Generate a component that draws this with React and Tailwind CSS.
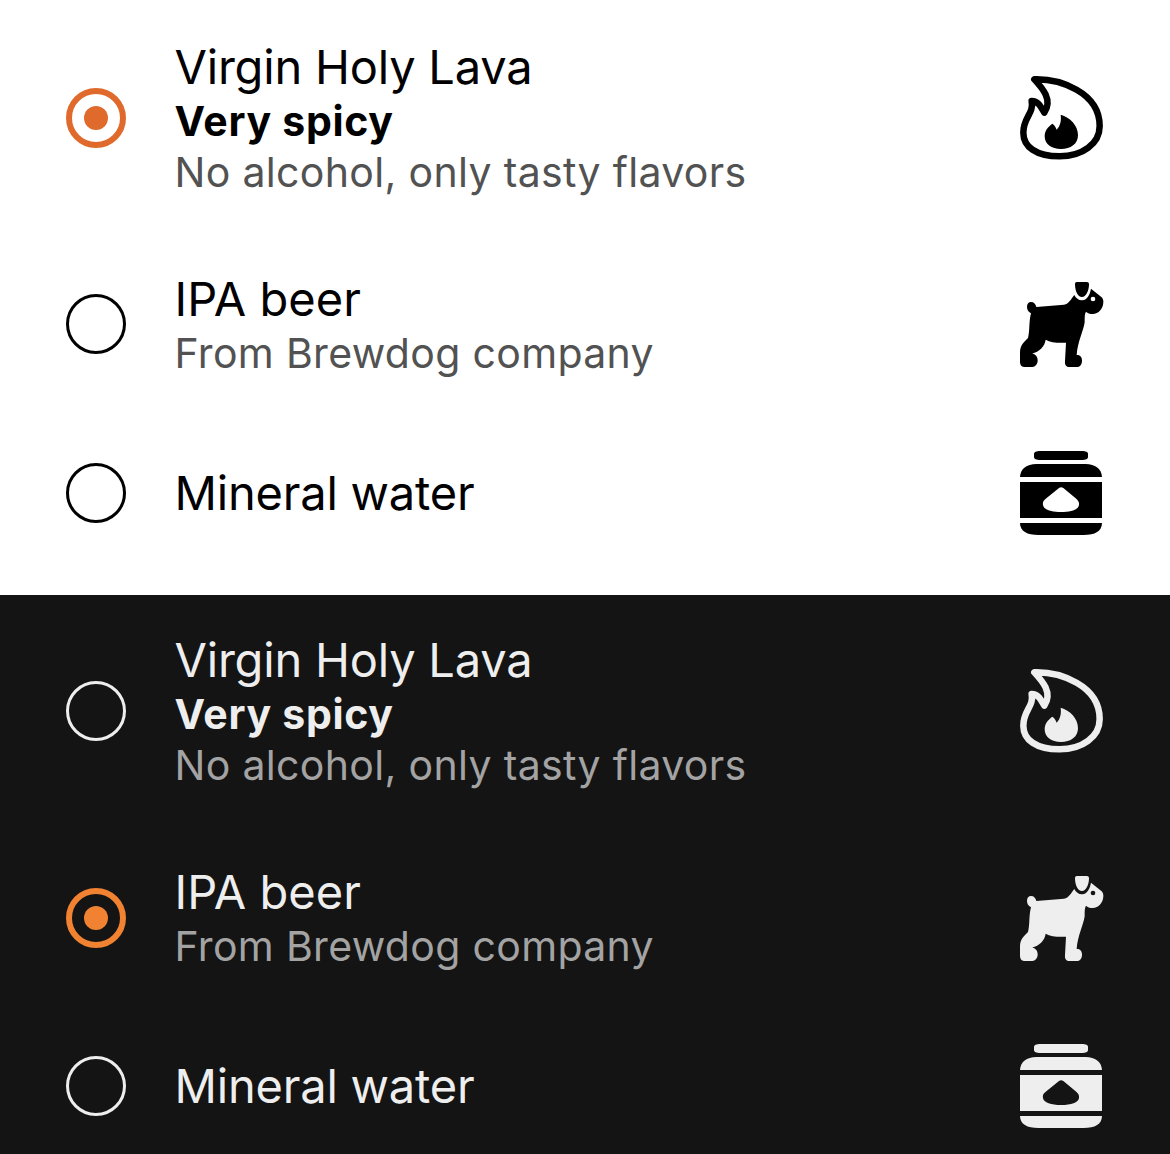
const Flame = () => (
  <svg viewBox="30 33 252 252" className="block size-[84px] overflow-visible" fill="none">
    <path
      d="M73 43C150 41 269 82 269 183C269 237 216 274 149 274C78 274 40 245 40 203C40 156 72 147 65 108C84 108 91 122 103 143C130 103 94 66 73 43Z"
      stroke="currentColor"
      strokeWidth="19.5"
      strokeLinejoin="round"
    />
    <path
      d="M152 149C180 157 204 181 204 211C204 237 182 252 153 252C124 252 104 237 104 214C104 196 113 187 127 176Q135 180 140 194C152 181 154 166 152 149Z"
      fill="currentColor"
    />
  </svg>
);

const Dog = () => (
  <svg viewBox="30 30 252 252" className="block size-[84px] overflow-visible" fill="currentColor">
    <path d="M201 30H230Q238 30 237 39C236 58 228 75 216 75C203 75 196 58 195 39Q194 30 201 30Z" />
    <path
      fillRule="evenodd"
      d="M193 69C198 79 207 86 217 85C232 84 240 67 243 50L273 74Q281 80 280 91C279 111 266 126 248 126C239 126 233 123 228 119C224 125 224 135 224 151C220 178 203 209 200 249C211 248 216 256 216 266C216 278 209 285 200 285H177C168 285 164 278 165 267L168 212C144 214 122 211 107 203C104 224 87 240 67 244C78 248 83 255 83 265C83 277 76 285 67 285H42C34 284 30 278 30 269V242C30 219 42 210 54 198C60 176 56 150 63 124C54 119 51 112 51 104C51 95 56 90 63 90C72 90 77 96 79 105L162 98C177 96 183 81 193 69ZM249 74A7 7 0 1 0 249 88A7 7 0 1 0 249 74Z"
    />
  </svg>
);

const Jar = () => (
  <svg viewBox="30 30 252 252" className="block size-[84px] overflow-visible" fill="currentColor">
    <path d="M92 30H214C229 30 234 33 234 39V48C234 54 228 57 214 57H92C78 57 72 54 72 48V39C72 33 78 30 92 30Z" />
    <path d="M30 108C31 84 50 69 79 69H227C255 69 275 84 276 108Z" />
    <path
      fillRule="evenodd"
      d="M30 123H276V231H30ZM147 141L109 172C99 180 98 184 99 192C101 206 124 213 153 213C184 213 205 206 207 192C208 184 206 180 197 172L160 141Q153 136 147 141Z"
    />
    <path d="M30 246H276C275 271 256 282 220 282H86C50 282 31 271 30 246Z" />
  </svg>
);

const options = [
  {
    id: "lava",
    title: "Virgin Holy Lava",
    highlight: "Very spicy",
    detail: "No alcohol, only tasty flavors",
    Icon: Flame,
    height: "h-[232px]",
    tracking: "tracking-[-0.2px]",
  },
  {
    id: "ipa",
    title: "IPA beer",
    detail: "From Brewdog company",
    Icon: Dog,
    height: "h-[180px]",
    tracking: "tracking-[0.05px]",
  },
  {
    id: "water",
    title: "Mineral water",
    Icon: Jar,
    height: "h-[158px]",
    tracking: "tracking-[-0.2px]",
  },
];

function Radio({ checked, accent }) {
  return (
    <span
      className={`flex size-[60px] shrink-0 items-center justify-center rounded-full ${
        checked ? `border-[6px] ${accent}` : "border-[3px] border-current"
      }`}
    >
      {checked && <span className="size-6 rounded-full bg-current" />}
    </span>
  );
}

function Group({ selected, className, accent, muted, ipaNudge }) {
  return (
    <div role="radiogroup" className={`px-[66px] ${className}`}>
      {options.map(({ id, title, highlight, detail, Icon, height, tracking }) => {
        const nudge = id === "ipa" ? ipaNudge : "";
        return (
          <div key={id} role="radio" aria-checked={id === selected} className={`flex items-center ${height}`}>
            <div className={nudge}>
              <Radio checked={id === selected} accent={accent} />
            </div>
            <div className="ml-[48.5px] flex-1 whitespace-nowrap">
              <div className={`text-[47px] leading-[58px] ${tracking}`}>{title}</div>
              {highlight && (
                <div className="text-[41px] leading-[51px] font-bold tracking-[0.7px]">{highlight}</div>
              )}
              {detail && <div className={`text-[41px] leading-[51px] tracking-[0.33px] ${muted}`}>{detail}</div>}
            </div>
            <div className={nudge}>
              <Icon />
            </div>
          </div>
        );
      })}
    </div>
  );
}

export default function App() {
  return (
    <main className="h-[1154px] w-[1170px] overflow-hidden bg-white font-['Inter',sans-serif]">
      <Group
        selected="lava"
        className="h-[595px] bg-white pt-[2px] text-black"
        accent="border-[#e0692c] text-[#e0692c]"
        muted="text-[#525252]"
        ipaNudge=""
      />
      <Group
        selected="ipa"
        className="h-[559px] bg-[#141414] text-[#eeeeee]"
        accent="border-[#f08232] text-[#f08232]"
        muted="text-[#a3a3a3]"
        ipaNudge="translate-y-px"
      />
    </main>
  );
}
